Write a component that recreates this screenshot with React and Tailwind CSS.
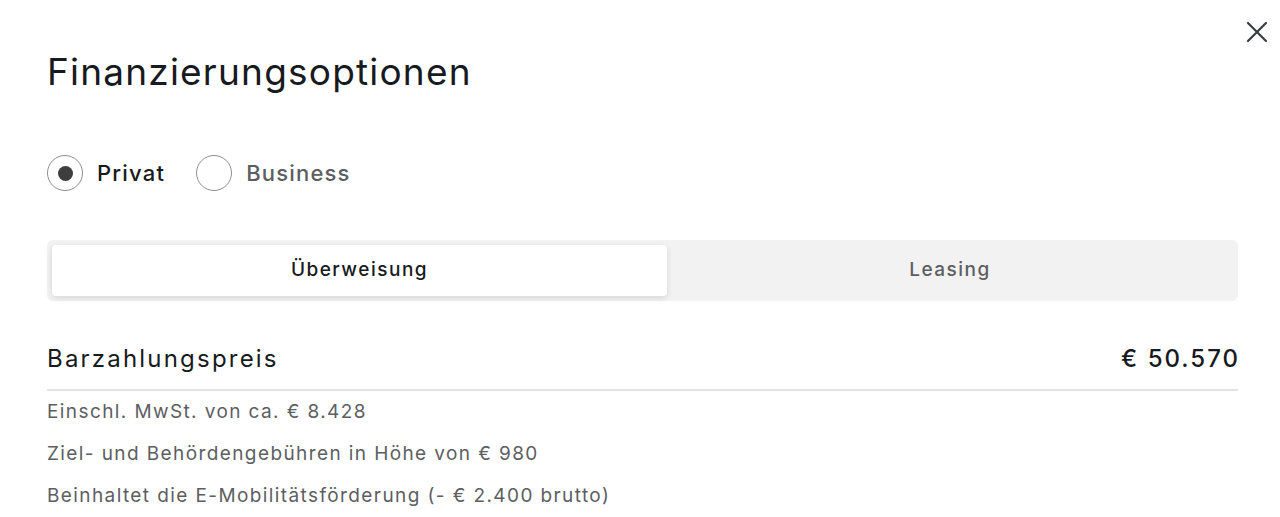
import React, { useState } from 'react';

const Radio = ({ label, checked, onClick }) => (
  <button type="button" onClick={onClick} className="flex items-center gap-[14px]">
    <span className="flex h-[36px] w-[36px] items-center justify-center rounded-full border-[1.5px] border-[#8e8e8e]">
      {checked && <span className="h-[15px] w-[15px] rounded-full bg-[#3e3e3e]" />}
    </span>
    <span className={`text-[22px] font-medium tracking-[1.2px] ${checked ? 'text-[#171a20]' : 'text-[#5c5e62]'}`}>{label}</span>
  </button>
);

const App = () => {
  const [customer, setCustomer] = useState('privat');
  const [tab, setTab] = useState('transfer');

  const notes = [
    'Einschl. MwSt. von ca. € 8.428',
    'Ziel- und Behördengebühren in Höhe von € 980',
    'Beinhaltet die E-Mobilitätsförderung (- € 2.400 brutto)',
  ];

  const tabClass = (active) =>
    `rounded-[4px] text-[19px] font-medium tracking-[1.5px] ${active ? 'bg-white text-[#171a20] shadow-[0_2px_6px_rgba(0,0,0,0.12)]' : 'text-[#5c5e62]'}`;

  return (
    <div className="relative min-h-[517px] w-full bg-white text-[#171a20]" style={{ fontFamily: 'Inter, sans-serif' }}>
      <button type="button" className="absolute right-[12px] top-[21px] text-[#393c41]" aria-label="Schließen">
        <svg width="22" height="22" viewBox="0 0 22 22" fill="none" stroke="currentColor" strokeWidth="2.2" strokeLinecap="round">
          <path d="M2 2l18 18M20 2L2 20" />
        </svg>
      </button>

      <div className="pl-[47px] pr-[42px] pt-[50px]">
        <h1 className="text-[37px] font-normal leading-[44px] tracking-[1.2px]">Finanzierungsoptionen</h1>

        <div className="mt-[61px] flex items-center gap-[31px]">
          <Radio label="Privat" checked={customer === 'privat'} onClick={() => setCustomer('privat')} />
          <Radio label="Business" checked={customer === 'business'} onClick={() => setCustomer('business')} />
        </div>

        <div className="mt-[49px] flex h-[61px] rounded-[6px] bg-[#f2f2f2] p-[5px]">
          <button type="button" onClick={() => setTab('transfer')} className={`w-[615px] ${tabClass(tab === 'transfer')}`}>
            Überweisung
          </button>
          <button type="button" onClick={() => setTab('leasing')} className={`flex-1 ${tabClass(tab === 'leasing')}`}>
            Leasing
          </button>
        </div>

        <div className="mt-[42px] flex items-end justify-between border-b-[2px] border-[#e2e2e2] pb-[14px]">
          <span className="text-[24px] leading-[32px] tracking-[2.2px]">Barzahlungspreis</span>
          <span className="-mr-[2px] text-[24px] font-medium leading-[32px] tracking-[2px]">€ 50.570</span>
        </div>

        <ul className="text-[19px] leading-[42px] tracking-[1.4px] text-[#5c5e62]">
          {notes.map((n) => (
            <li key={n}>{n}</li>
          ))}
        </ul>
      </div>
    </div>
  );
};

export default App;
